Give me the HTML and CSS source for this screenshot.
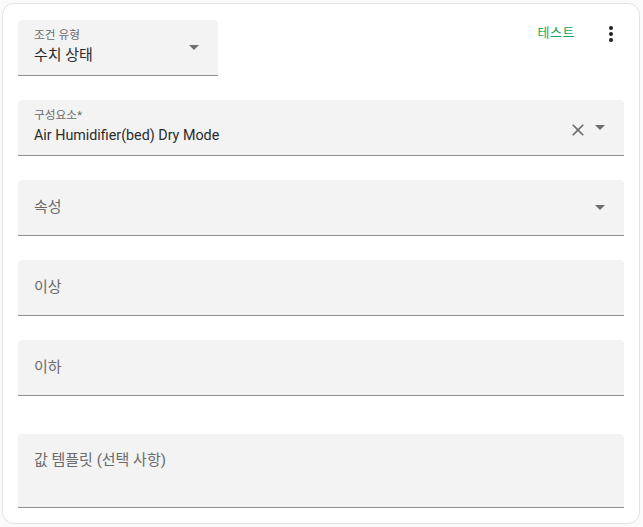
FILE: index.html
```html
<!DOCTYPE html>
<html lang="ko">
<head>
<meta charset="utf-8">
<link rel="stylesheet" href="styles.css">
</head>
<body>
<div class="card">
  <div class="header">
    <div class="field field-small">
      <div class="field-text">
        <span class="float-label">조건 유형</span>
        <span class="value">수치 상태</span>
      </div>
      <span class="arrow"></span>
    </div>
    <div class="actions">
      <span class="test-btn">테스트</span>
      <span class="menu">
        <svg width="24" height="24" viewBox="0 0 24 24"><path fill="#212121" d="M12,16A2,2 0 0,1 14,18A2,2 0 0,1 12,20A2,2 0 0,1 10,18A2,2 0 0,1 12,16M12,10A2,2 0 0,1 14,12A2,2 0 0,1 12,14A2,2 0 0,1 10,12A2,2 0 0,1 12,10M12,4A2,2 0 0,1 14,6A2,2 0 0,1 12,8A2,2 0 0,1 10,6A2,2 0 0,1 12,4Z"/></svg>
      </span>
    </div>
  </div>

  <div class="field">
    <div class="field-text">
      <span class="float-label">구성요소*</span>
      <span class="value">Air Humidifier(bed) Dry Mode</span>
    </div>
    <svg class="clear" width="24" height="24" viewBox="0 0 24 24"><path fill="#6f6f6f" d="M19,6.41L17.59,5L12,10.59L6.41,5L5,6.41L10.59,12L5,17.59L6.41,19L12,13.41L17.59,19L19,17.59L13.41,12L19,6.41Z"/></svg>
    <span class="arrow"></span>
  </div>

  <div class="field">
    <span class="placeholder">속성</span>
    <span class="arrow"></span>
  </div>

  <div class="field">
    <span class="placeholder">이상</span>
  </div>

  <div class="field">
    <span class="placeholder">이하</span>
  </div>

  <div class="field field-area">
    <span class="placeholder">값 템플릿 (선택 사항)</span>
  </div>
</div>
</body>
</html>
```

FILE: styles.css
```css
* { box-sizing: border-box; }

html, body {
  margin: 0;
  padding: 0;
  background: #fafafa;
  font-family: Roboto, "Noto Sans CJK KR", sans-serif;
  color: #212121;
}

body {
  padding: 3px 0 0 2px;
}

.card {
  width: 638px;
  height: 521px;
  background: #ffffff;
  border: 1px solid #e3e3e3;
  border-radius: 12px;
  padding: 16px 15px 0 15px;
  display: flex;
  flex-direction: column;
  gap: 24px;
}

.header {
  display: flex;
  align-items: flex-start;
  justify-content: space-between;
}

.actions {
  display: flex;
  align-items: center;
  gap: 24px;
  margin-top: 1px;
  margin-right: 1px;
}

.test-btn {
  color: #16a85a;
  font-size: 13px;
  letter-spacing: 0.5px;
  line-height: 20px;
  margin-top: -2px;
}

.menu {
  display: flex;
  width: 24px;
  height: 24px;
  margin-top: 1px;
}

.field {
  position: relative;
  height: 56px;
  background: #f3f3f3;
  border-bottom: 1px solid #8f8f8f;
  border-radius: 4px 4px 0 0;
  display: flex;
  align-items: center;
  padding: 0 16px;
  flex-shrink: 0;
}

.field-small {
  width: 200px;
}

.field-text {
  flex: 1;
  display: flex;
  flex-direction: column;
  align-self: flex-start;
  padding-top: 8px;
}

.float-label {
  font-size: 11.7px;
  line-height: 14px;
  color: #6b6b6b;
}

.value {
  font-size: 14.3px;
  line-height: 22px;
  margin-top: 2px;
  color: #2b2b2b;
}

.field-small .value {
  font-size: 15px;
}

.placeholder {
  flex: 1;
  font-size: 15px;
  color: #6b6b6b;
  line-height: 20px;
  margin-top: -2px;
}

.arrow {
  width: 0;
  height: 0;
  border-left: 5px solid transparent;
  border-right: 5px solid transparent;
  border-top: 5px solid #6f6f6f;
  margin-right: 3px;
  margin-top: -1px;
}

.clear {
  width: 20px;
  height: 20px;
  margin-right: 7px;
  margin-top: 4px;
}

.field-area {
  height: 74px;
  align-items: flex-start;
  padding-top: 18px;
  margin-top: 14px;
}
```
